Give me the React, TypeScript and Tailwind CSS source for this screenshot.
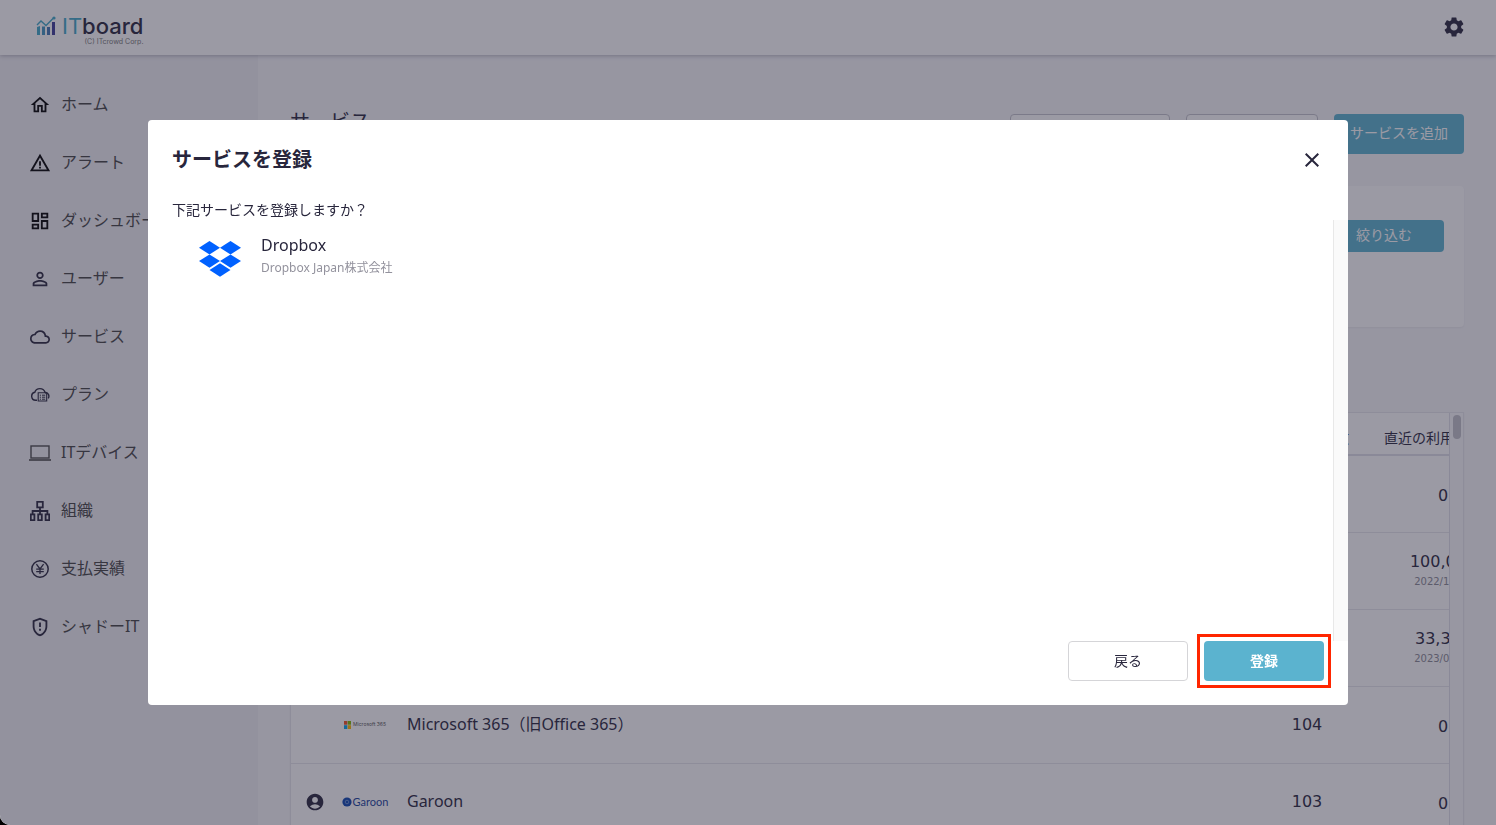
import type { ReactNode } from "react";
import {
  MdAccountCircle,
  MdClose,
  MdCloudQueue,
  MdOutlineDashboard,
  MdOutlineGppMaybe,
  MdOutlineHome,
  MdPersonOutline,
  MdSettings,
  MdWarningAmber,
} from "react-icons/md";

interface NavItem {
  label: string;
  icon: ReactNode;
}

interface ServiceRow {
  id: string;
  name: string;
  logo?: ReactNode;
  hasOwner?: boolean;
  accounts: string;
  cost: string;
  costDate?: string;
}

function PlanIcon() {
  return (
    <svg width="20" height="20" viewBox="0 0 20 20" fill="none" stroke="#28263c">
      <path d="M7 15.2H5.6A4 4 0 0 1 4.8 7.3 5.4 5.4 0 0 1 15 7.2a4 4 0 0 1 3.2 6.2" strokeWidth="1.4" />
      <path d="M8.2 7.7h7.2l1.3 1.3v7H8.2z" strokeWidth="1.1" />
      <path d="M9.8 10.2h1.2M12 10.2h3.2M9.8 12.2h1.2M12 12.2h3.2M9.8 14.2h1.2M12 14.2h3.2" strokeWidth="1" />
    </svg>
  );
}

function LaptopIcon() {
  return (
    <svg className="shrink-0" width="22" height="18" viewBox="0 0 22 18" fill="none" stroke="#4a4a4a">
      <rect x="2" y="2" width="18" height="12" strokeWidth="1.4" />
      <path d="M0 16h22" strokeWidth="1.6" />
    </svg>
  );
}

function OrgIcon() {
  return (
    <svg width="20" height="20" viewBox="0 0 20 20" fill="none" stroke="#28263c" strokeWidth="1.8">
      <rect x="7.2" y="0.8" width="5.6" height="5.6" />
      <path d="M10 6.4v7M2.6 13.4V10h14.8v3.4" />
      <rect x="0.8" y="13.4" width="3.6" height="5.8" />
      <rect x="8.2" y="13.4" width="3.6" height="5.8" />
      <rect x="15.6" y="13.4" width="3.6" height="5.8" />
    </svg>
  );
}

function YenIcon() {
  return (
    <svg width="20" height="20" viewBox="0 0 20 20" fill="none" stroke="#28263c" strokeWidth="1.5">
      <circle cx="10" cy="10" r="8.2" />
      <path d="M6.4 5.2 10 10l3.6-4.8M10 10v5M6.2 10.2h7.6M6.2 12.6h7.6" strokeWidth="1.3" />
    </svg>
  );
}

function BrandMark() {
  return (
    <svg width="20" height="20" viewBox="0 0 20 20" fill="none">
      <path d="M1 11v8h3v-9z" fill="#3fa9c9" />
      <path d="M6 10.5h3V19H6z" fill="#4094c0" />
      <path d="M11 11h3v8h-3z" fill="#4076b4" />
      <path d="M16 6h3v13h-3z" fill="#3c3c98" />
      <path d="M1 9 5 5l5 4.5L17.5 2" stroke="#3fa9c9" strokeWidth="1.4" />
      <circle cx="18" cy="2" r="1.6" fill="#3fa9c9" />
    </svg>
  );
}

function DropboxLogo() {
  return (
    <svg width="42" height="36" viewBox="0 0 42 36" fill="#0061ff" aria-hidden="true">
      <path d="M10.5 0 21 6.7l-10.5 6.7L0 6.7z" />
      <path d="M31.5 0 42 6.7l-10.5 6.7L21 6.7z" />
      <path d="M10.5 13.4 21 20.1l-10.5 6.7L0 20.1z" />
      <path d="M31.5 13.4 42 20.1l-10.5 6.7L21 20.1z" />
      <path d="M21 22.3 31.5 29 21 35.7 10.5 29z" />
    </svg>
  );
}

function MicrosoftLogo() {
  return (
    <span className="flex items-center gap-0.5 text-[#555]">
      <svg className="shrink-0" width="7" height="8" viewBox="0 0 7 8">
        <path d="M0 0h3.3v3.7H0z" fill="#f25022" />
        <path d="M3.7 0H7v3.7H3.7z" fill="#7fba00" />
        <path d="M0 4.2h3.3V8H0z" fill="#00a4ef" />
        <path d="M3.7 4.2H7V8H3.7z" fill="#ffb900" />
      </svg>
      <span className="font-[Inter,sans-serif] text-[5px] leading-none whitespace-nowrap">Microsoft 365</span>
    </span>
  );
}

function GaroonLogo() {
  return (
    <span className="flex items-center gap-px text-[#173f9c]">
      <svg className="shrink-0" width="10" height="10" viewBox="0 0 10 10">
        <circle cx="5" cy="5" r="4.6" fill="#0b45b0" />
        <circle cx="5" cy="5" r="1.8" fill="none" stroke="#9dbbe8" strokeWidth="0.6" />
      </svg>
      <span className="font-[Lato,sans-serif] text-[11px] leading-none">Garoon</span>
    </span>
  );
}

const navItems: NavItem[] = [
  { label: "ホーム", icon: <MdOutlineHome size={22} className="shrink-0 text-black" /> },
  { label: "アラート", icon: <MdWarningAmber size={22} className="shrink-0 text-black" /> },
  { label: "ダッシュボード", icon: <MdOutlineDashboard size={22} className="shrink-0 text-black" /> },
  { label: "ユーザー", icon: <MdPersonOutline size={22} className="shrink-0" /> },
  { label: "サービス", icon: <MdCloudQueue size={20} className="shrink-0" /> },
  { label: "プラン", icon: <PlanIcon /> },
  { label: "ITデバイス", icon: <LaptopIcon /> },
  { label: "組織", icon: <OrgIcon /> },
  { label: "支払実績", icon: <YenIcon /> },
  { label: "シャドーIT", icon: <MdOutlineGppMaybe size={22} className="shrink-0" /> },
];

const rows: ServiceRow[] = [
  { id: "r1", name: "", accounts: "", cost: "0" },
  { id: "r2", name: "", accounts: "", cost: "100,000", costDate: "2022/10/01" },
  { id: "r3", name: "", accounts: "", cost: "33,333", costDate: "2023/01/01" },
  { id: "r4", name: "Microsoft 365（旧Office 365）", logo: <MicrosoftLogo />, accounts: "104", cost: "0" },
  { id: "r5", name: "Garoon", logo: <GaroonLogo />, hasOwner: true, accounts: "103", cost: "0" },
];

function Header() {
  return (
    <header className="z-10 flex h-[55px] shrink-0 items-center justify-between bg-white pr-[30px] pl-9 shadow-[0_1px_4px_rgba(40,38,60,0.3)]">
      <div className="flex flex-col items-end pt-1">
        <a href="#home" className="flex items-center gap-1.5">
          <BrandMark />
          <span className="font-[Inter,sans-serif] text-[22px] leading-6 font-medium">
            <span className="font-normal text-[#3fa9c9]">IT</span>board
          </span>
        </a>
        <span className="font-[Inter,sans-serif] text-[7px] leading-2 text-[#777]">(C) ITcrowd Corp.</span>
      </div>
      <button type="button" aria-label="設定" className="pb-0.5">
        <MdSettings size={24} />
      </button>
    </header>
  );
}

function Sidebar() {
  return (
    <nav className="w-[258px] shrink-0 bg-[#f0f0f4] pt-5">
      <ul>
        {navItems.map((item) => (
          <li key={item.label}>
            <a href="#nav" className="flex h-[58px] items-center gap-[11px] pl-[30px] text-base text-[#444]">
              <span className="flex w-5 justify-center pt-0.5 text-[#28263c]">{item.icon}</span>
              {item.label}
            </a>
          </li>
        ))}
      </ul>
    </nav>
  );
}

function ServiceTable() {
  return (
    <div className="mt-[85px] flex border border-[#e6e6ec] bg-white shadow-xs">
      <div className="min-w-0 flex-1 overflow-hidden">
        <table className="w-[calc(100%+62px)] table-fixed">
          <colgroup>
            <col className="w-12" />
            <col className="w-[52px]" />
            <col />
            <col className="w-[136px]" />
            <col className="w-[136px]" />
          </colgroup>
          <thead>
            <tr className="h-[42px] border-b-2 border-[#e0e0e8] text-sm">
              <th />
              <th />
              <th />
              <th className="pt-2 font-normal whitespace-nowrap">アカウント数</th>
              <th className="pt-2 pr-1.5 font-normal whitespace-nowrap">直近の利用料金額</th>
            </tr>
          </thead>
          <tbody>
            {rows.map((row) => (
              <tr key={row.id} className="h-[77px] border-b border-[#e6e6ec]">
                <td>{row.hasOwner ? <MdAccountCircle size={20} className="mx-auto" /> : null}</td>
                <td>
                  <div className="flex justify-center">{row.logo}</div>
                </td>
                <td className="pb-0.5 pl-4 text-base">{row.name}</td>
                <td className="text-center font-['DejaVu_Sans',sans-serif] text-base">{row.accounts}</td>
                <td className="pt-1 text-center font-['DejaVu_Sans',sans-serif] text-base">
                  <div className="leading-5">{row.cost}</div>
                  {row.costDate ? <div className="pb-0.5 text-[10px] leading-5 text-[#8a8a94]">{row.costDate}</div> : null}
                </td>
              </tr>
            ))}
          </tbody>
        </table>
      </div>
      <div className="w-[14px] shrink-0 border-l border-[#e0e0e8] bg-[#fafafc] pt-0.5">
        <div className="mx-auto h-6 w-2 rounded-full bg-[#c1c1c8]" />
      </div>
    </div>
  );
}

function RegisterDialog() {
  return (
    <div className="fixed inset-0 z-20 flex items-center justify-center rounded-bl-[10px] bg-[rgba(40,38,60,0.465)]">
      <section
        role="dialog"
        aria-modal="true"
        aria-labelledby="dialog-title"
        className="flex h-[585px] w-full max-w-[1200px] flex-col rounded bg-white pb-6"
      >
        <div className="flex h-20 shrink-0 items-center justify-between px-6">
          <h2 id="dialog-title" className="text-xl font-bold">
            サービスを登録
          </h2>
          <button type="button" aria-label="閉じる" className="flex">
            <MdClose size={24} />
          </button>
        </div>
        <p className="px-6 text-sm leading-5">下記サービスを登録しますか？</p>
        <div className="flex min-h-0 flex-1">
          <div className="flex flex-1 items-start gap-5 pt-[21px] pl-[51px]">
            <DropboxLogo />
            <div className="-mt-2">
              <p className="text-base leading-6">Dropbox</p>
              <p className="text-xs leading-[22px] text-[#93929d]">Dropbox Japan株式会社</p>
            </div>
          </div>
          <div className="w-[15px] shrink-0 border-l border-[#e8e8e8] bg-[#fafafa]" />
        </div>
        <div className="flex shrink-0 justify-end gap-4 px-6">
          <button type="button" className="h-10 w-[120px] rounded border border-[#d5d5d8] bg-white text-sm">
            戻る
          </button>
          <div className="outline-3 outline-offset-4 outline-[#ff2600]">
            <button type="button" className="h-10 w-[120px] rounded bg-[#5bb3cf] text-sm font-bold text-white">
              登録
            </button>
          </div>
        </div>
      </section>
    </div>
  );
}

export default function App() {
  return (
    <div className="h-screen bg-black font-['Noto_Sans','Noto_Sans_CJK_JP',sans-serif] text-[#28263c]">
      <div className="flex h-full flex-col overflow-hidden rounded-bl-[10px] bg-[#f7f7fa]">
        <Header />
        <div className="flex min-h-0 flex-1">
          <Sidebar />
          <main className="min-w-0 flex-1 px-8 pt-[59px]">
            <div className="flex items-start justify-between">
              <h1 className="text-xl leading-4">サービス</h1>
              <div className="flex gap-4">
                <button type="button" aria-label="一括操作" className="h-10 w-40 rounded border border-[#c4c4cc] bg-white" />
                <button type="button" aria-label="出力" className="h-10 w-[132px] rounded border border-[#c4c4cc] bg-white" />
                <button type="button" className="h-10 rounded bg-[#5bb3cf] px-4 pb-0.5 text-sm whitespace-nowrap text-white">
                  サービスを追加
                </button>
              </div>
            </div>
            <div className="mt-8 flex h-[141px] justify-end rounded bg-white px-5 pt-[34px] shadow-xs">
              <button type="button" className="h-8 w-[120px] rounded bg-[#5bb3cf] pb-0.5 text-sm text-white">
                絞り込む
              </button>
            </div>
            <ServiceTable />
          </main>
        </div>
      </div>
      <RegisterDialog />
    </div>
  );
}
